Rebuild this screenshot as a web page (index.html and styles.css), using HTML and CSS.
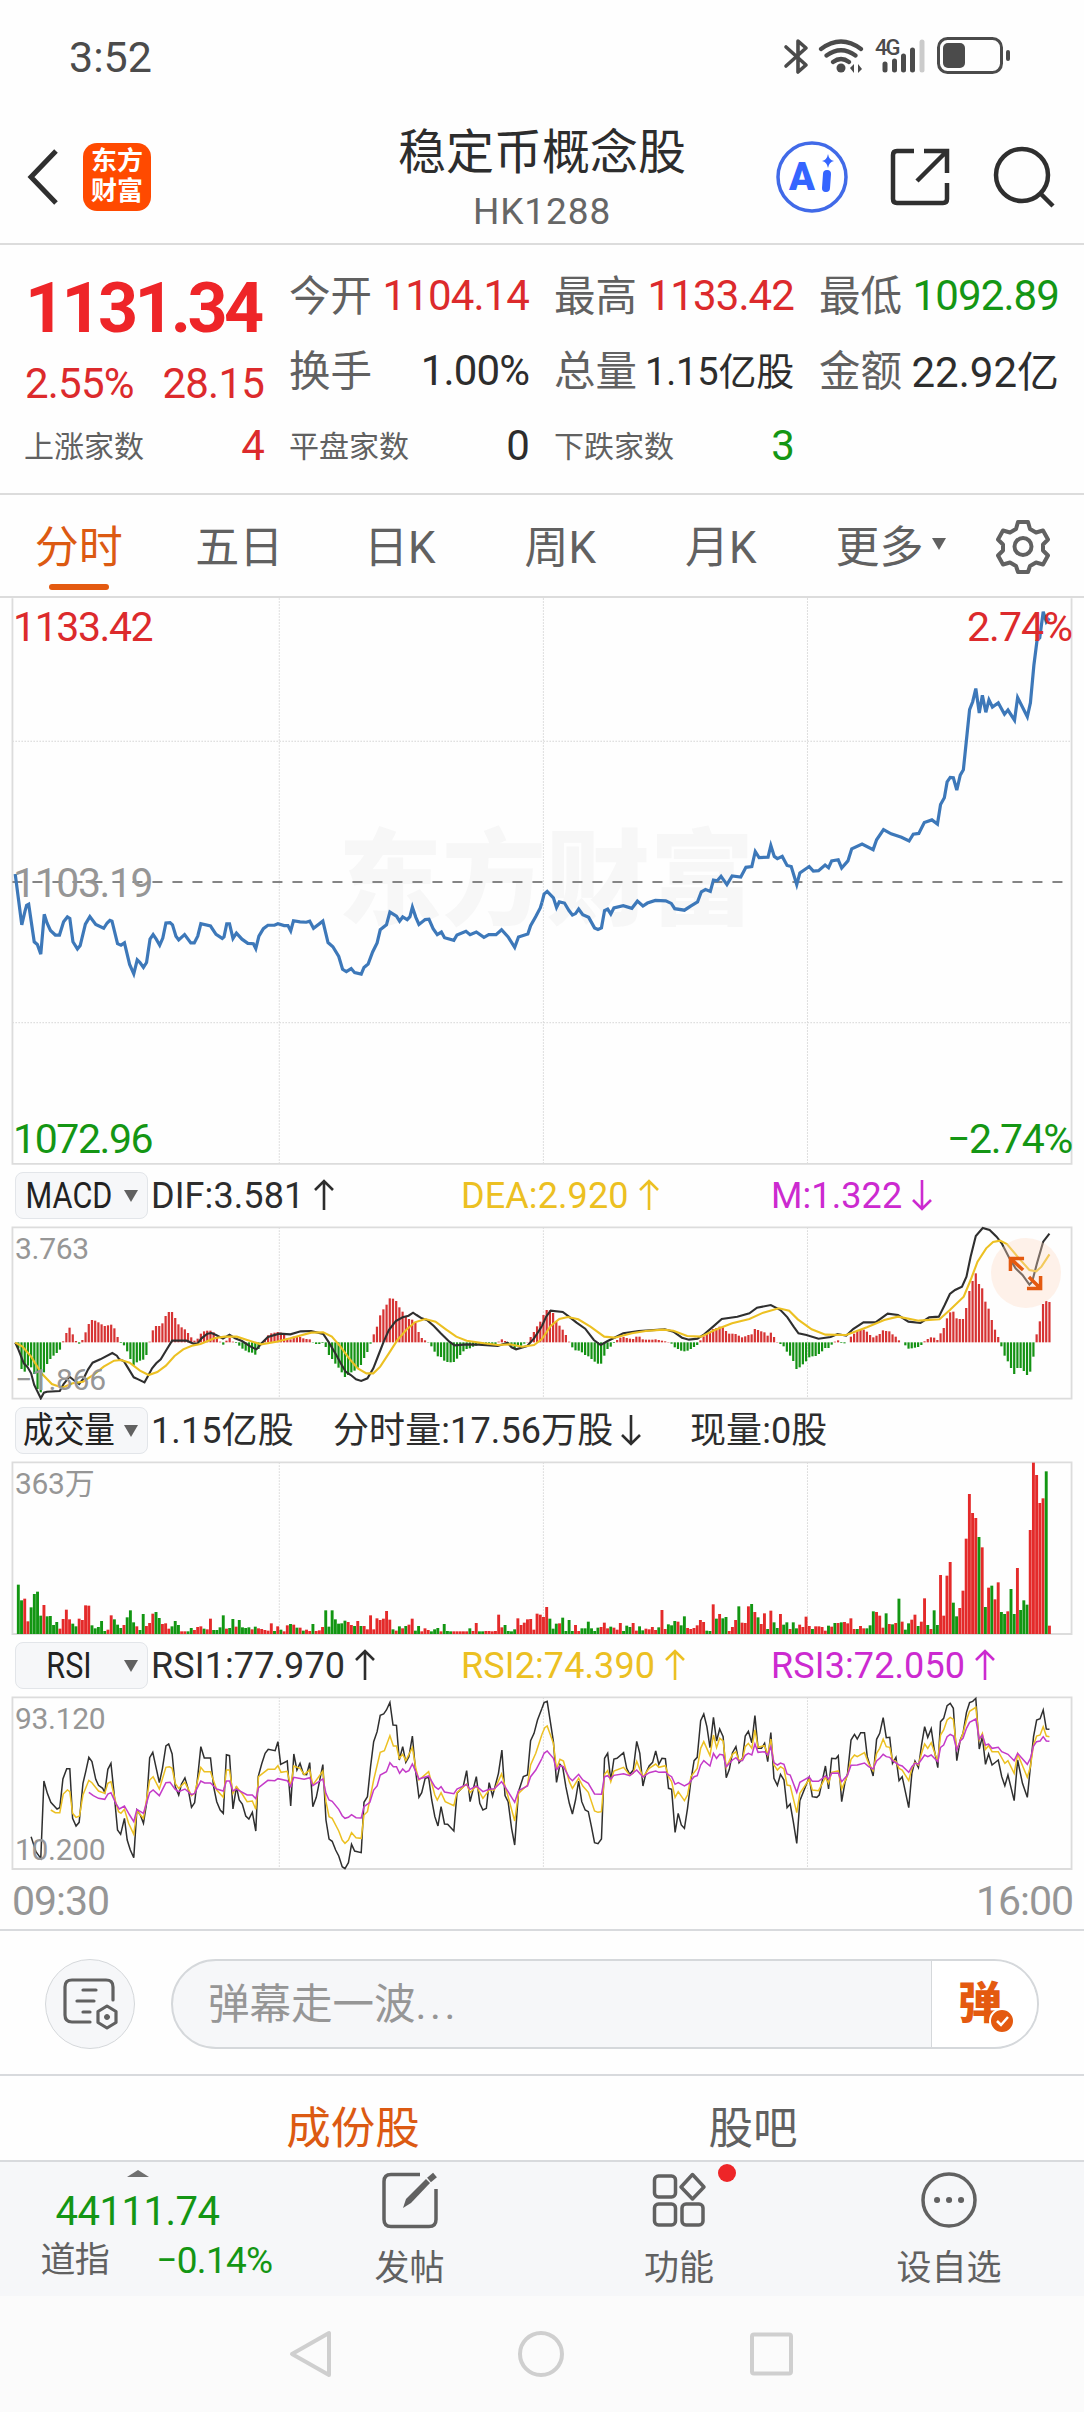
FILE: index.html
```html
<!DOCTYPE html>
<html lang="zh-CN">
<head>
  <meta charset="UTF-8">
  <meta name="viewport" content="width=device-width, initial-scale=1.0">
  <title>稳定币概念股 HK1288</title>
  <link rel="stylesheet" href="styles.css">
</head>
<body>
  <div class="statusbar">
    <span class="clock">3:52</span>
    <svg class="status-icons" width="230" height="44" viewBox="782 34 230 44" fill="none" stroke="#4b4b4b">
      <path d="M786 47l20 18-8 7V41l8 7-20 18" stroke-width="3.600" stroke-linejoin="round" stroke-linecap="round"/>
      <path d="M821 49q20-15 40 0M826.500 55.500q14.500-10.500 29 0M833 62q8-6 16 0" stroke-width="4.200" stroke-linecap="round"/>
      <circle cx="841" cy="68" r="4.500" fill="#4b4b4b" stroke="none"/>
      <path d="M850 68l4-4v9zM862 69l-4 4v-9z" fill="#4b4b4b" stroke="none"/>
      <text x="875" y="55" class="net">4G</text>
      <path d="M885 64v6M894.500 61v9M903.500 56v14M912.500 50v20" stroke-width="5" stroke-linecap="round"/>
      <path d="M922 42v28" stroke="#cbcbcb" stroke-width="5" stroke-linecap="round"/>
      <rect x="938.500" y="38.500" width="63" height="34" rx="9" stroke-width="3"/>
      <rect x="943" y="43" width="22" height="25" rx="5" fill="#4b4b4b" stroke="none"/>
      <path d="M1008 52v7" stroke-width="4" stroke-linecap="round"/>
    </svg>
  </div>

  <header class="header">
    <div class="header-left">
      <svg width="34" height="58" viewBox="0 0 34 58" fill="none" stroke="#2f2f2f" stroke-width="5"><path d="M31 3L6 29l25 26"/></svg>
      <div class="logo">东方<br>财富</div>
    </div>
    <div class="title">
      <h1>稳定币概念股</h1>
      <p>HK1288</p>
    </div>
    <div class="header-right">
      <svg width="74" height="74" viewBox="0 0 74 74">
        <circle cx="37" cy="37" r="34" fill="#fff" stroke="#416ae8" stroke-width="3.500"/>
        <text x="14" y="50" class="ai">A</text>
        <path d="M52 34l-1 14" stroke="#3565ff" stroke-width="8" stroke-linecap="round"/>
        <path d="M53 14q1 6 6 7-5 1-6 7-1-6-6-7 5-1 6-7z" fill="#3565ff"/>
      </svg>
      <svg width="60" height="60" viewBox="0 0 60 60" fill="none" stroke="#2f2f2f" stroke-width="4.500">
        <path d="M24 4H7q-4 0-4 4v44q0 4 4 4h46q4 0 4-4V36M34 4h23v22M57 4L27 34"/>
      </svg>
      <svg width="64" height="64" viewBox="0 0 64 64" fill="none" stroke="#2f2f2f" stroke-width="4.500">
        <circle cx="31" cy="30" r="26"/><path d="M49 48l13 13"/>
      </svg>
    </div>
  </header>

  <section class="quote">
    <div class="main-price">
      <strong>1131.34</strong>
      <div class="change"><span>2.55%</span><span>28.15</span></div>
    </div>
    <div class="cell"><label>今开</label><b class="red">1104.14</b></div>
    <div class="cell"><label>最高</label><b class="red">1133.42</b></div>
    <div class="cell"><label>最低</label><b class="green">1092.89</b></div>
    <div class="cell"><label>换手</label><b>1.00%</b></div>
    <div class="cell"><label>总量</label><b class="tight">1.15亿股</b></div>
    <div class="cell"><label>金额</label><b class="amount">22.92亿</b></div>
    <div class="cell small"><label>上涨家数</label><b class="red">4</b></div>
    <div class="cell small"><label>平盘家数</label><b>0</b></div>
    <div class="cell small"><label>下跌家数</label><b class="green">3</b></div>
  </section>

  <nav class="tabs">
    <a class="active">分时</a>
    <a>五日</a>
    <a>日K</a>
    <a>周K</a>
    <a>月K</a>
    <a class="more">更多<i class="caret"></i></a>
    <a class="gear">
      <svg width="56" height="56" viewBox="0 0 56 56" fill="none" stroke="#616161" stroke-width="4" stroke-linejoin="round">
        <path d="M23 4h10l2 7 6 3.500 7-2 5 9-5 5v6l5 5-5 9-7-2-6 3.500-2 6H23l-2-6-6-3.500-7 2-5-9 5-5v-6l-5-5 5-9 7 2 6-3.500z"/>
        <circle cx="28" cy="28.500" r="8.500"/>
      </svg>
    </a>
  </nav>

  <div class="chart price">
    <span class="watermark">东方财富</span>
    <svg viewBox="0 21.3 3136 1509.5" preserveAspectRatio="none">
      <path class="grid" d="M808 22V1525M1572 22V1525M2336 22V1525M36 402H3100M36 1150H3100"/>
      <path class="frame" d="M36 22V1525H3100V22"/>
      <path class="base" d="M36 776H3100"/>
      <polyline class="blue" points="44,755 63,890 72,855 77,838 83,835 99,935 108,942 118,968 128,862 136,885 146,905 160,917 172,917 184,882 195,869 202,873 211,935 224,954 232,945 247,888 260,868 277,889 300,899 310,885 318,878 324,880 340,940 350,944 360,938 375,995 387,1020 397,983 405,990 415,1003 424,990 434,928 443,916 452,928 462,944 471,925 480,885 492,884 499,890 509,920 517,930 534,916 552,938 562,938 572,920 581,887 609,893 625,915 643,926 648,922 656,887 664,887 674,926 684,912 700,928 717,939 733,940 740,953 749,920 762,900 775,891 794,891 804,887 822,892 833,892 841,906 849,879 868,882 886,883 896,880 907,899 934,880 949,937 963,948 980,974 991,1008 1002,1014 1016,1006 1026,1017 1045,1021 1053,1003 1065,994 1078,962 1091,938 1100,903 1118,890 1128,856 1147,867 1156,880 1165,869 1178,876 1186,868 1193,843 1203,870 1212,889 1230,876 1241,875 1253,900 1265,916 1277,909 1286,924 1313,931 1322,917 1348,907 1360,916 1378,909 1400,923 1414,916 1435,916 1451,903 1470,922 1489,950 1500,922 1527,914 1535,892 1550,868 1563,845 1568,830"/>
      <polyline class="blue" transform="translate(1568 0)" points="0,830 6,808 15,801 33,818 42,844 50,829 65,832 78,852 88,864 97,860 106,848 118,863 135,870 152,898 162,902 172,898 181,852 190,848 199,861 208,845 235,839 260,846 276,827 292,840 305,832 328,825 358,826 374,833 384,847 412,851 430,840 450,829 461,802 473,796 487,801 496,771 507,773 518,761 535,783 550,760 575,763 590,737 607,735 617,695 628,711 654,710 662,679 672,708 681,714 695,708 709,732 721,735 737,783 746,752 773,735 785,747 800,746 819,731 829,738 838,720 857,717 867,739 885,720 896,688 926,675 958,690 968,664 988,637 1010,648 1040,657 1062,667 1074,649 1090,647 1106,618 1128,611 1144,622 1153,570 1164,552 1172,510 1181,498 1190,499 1200,532 1210,492 1219,478 1230,380 1237,318 1246,297 1255,262 1265,327 1274,280 1284,325 1293,292 1303,311 1320,300 1338,330 1348,319 1367,346 1376,286 1404,337 1413,300 1423,200 1432,135 1440,127 1450,58 1459,85 1468,75"/>
    </svg>
    <span class="tl red">1133.42</span>
    <span class="tr red">2.74%</span>
    <span class="ml">1103.19</span>
    <span class="bl green">1072.96</span>
    <span class="br green">−2.74%</span>
  </div>

  <div class="legend macd-legend">
    <button><em>MACD</em><i class="caret"></i></button>
    <span>DIF:3.581<svg class="arrow" viewBox="0 0 20 32"><path d="M10 31V2M1 11l9-9 9 9"/></svg></span>
    <span class="yellow">DEA:2.920<svg class="arrow" viewBox="0 0 20 32"><path d="M10 31V2M1 11l9-9 9 9"/></svg></span>
    <span class="purple">M:1.322<svg class="arrow" viewBox="0 0 20 32"><path d="M10 1v29M1 21l9 9 9-9"/></svg></span>
  </div>
  <div class="chart sub">
    <svg viewBox="0 198 3136 522" preserveAspectRatio="none">
      <path class="grid" d="M808 202V716M1572 202V716M2336 202V716"/>
      <path class="frame" d="M36 202H3100V716H36z"/>
      <g id="macdBars"></g>
      <polyline class="dark" points="44,548 53,568 69,610 80,622 90,640 99,675 118,715 127,698 136,695 173,693 184,672 201,650 213,660 229,672 242,655 255,628 268,608 290,598 325,579 338,587 345,598 358,603 368,620 387,652 400,658 418,667 427,650 440,625 452,610 465,598 480,572 498,542 540,542 560,551 572,550 583,535 600,521 612,519 625,525 645,536 664,524 680,535 700,543 725,560 742,568 757,550 775,531 808,521 840,523 870,514 900,513 935,522 950,545 970,580 985,608 1000,635 1015,645 1030,658 1045,663 1063,655 1080,625 1095,585 1110,545 1125,510 1145,483 1165,472 1182,467 1195,458 1205,465 1220,475 1235,480 1255,498 1275,520 1300,545 1315,556 1350,553 1385,554 1440,558 1468,548 1480,562 1493,568 1525,558 1545,535 1568,498"/>
      <polyline class="dark" transform="translate(1568 0)" points="0,498 12,470 25,452 60,456 78,470 100,488 125,506 150,540 170,555 190,543 208,534 235,520 280,513 355,508 380,515 405,533 425,539 450,536 470,522 495,500 520,477 565,470 600,460 622,443 662,435 690,450 710,472 728,500 742,520 765,525 800,536 835,531 855,522 880,527 900,507 930,487 965,487 1000,461 1030,465 1060,485 1095,489 1120,472 1148,470 1165,435 1180,402 1195,390 1215,380 1228,350 1240,290 1255,228 1275,204 1295,210 1315,230 1330,250 1350,290 1370,325 1390,345 1410,374 1418,365 1432,310 1450,245 1468,221"/>
      <polyline class="gold" points="44,548 65,560 90,590 120,640 150,672 180,683 210,670 240,665 270,645 300,620 330,602 350,600 375,608 405,632 430,645 455,636 480,617 505,588 530,568 555,557 580,552 620,535 650,530 685,530 715,540 755,553 800,545 840,535 900,518 935,517 960,530 985,560 1010,595 1035,625 1060,640 1080,640 1100,620 1125,580 1150,540 1175,510 1200,487 1230,477 1260,485 1290,508 1320,530 1350,542 1400,550 1440,555 1475,553 1510,560 1545,555 1568,537"/>
      <polyline class="gold" transform="translate(1568 0)" points="0,537 25,498 50,477 75,471 105,478 140,500 180,530 210,533 260,520 300,513 350,509 380,512 420,528 460,530 500,510 550,490 600,477 640,458 685,445 715,452 740,478 780,508 820,524 880,525 940,502 990,480 1030,470 1090,482 1150,478 1180,450 1220,410 1240,360 1260,305 1285,265 1305,246 1325,242 1345,252 1380,295 1410,330 1430,334 1445,320 1468,283"/>
    </svg>
    <span class="tl">3.763</span>
    <span class="bl">−1.866</span>
    <div class="expand">
      <svg width="70" height="72" viewBox="0 0 70 72" fill="none" stroke="#e45a10" stroke-width="3.500">
        <path d="M19 34V21h14M20 22l12 11M50 39v13H36M49 51L38 40"/>
      </svg>
    </div>
  </div>

  <div class="legend">
    <button><em>成交量</em><i class="caret"></i></button>
    <span class="vol">1.15亿股</span>
    <span class="vol-now">分时量:17.56万股<svg class="arrow" viewBox="0 0 20 32"><path d="M10 1v29M1 21l9 9 9-9"/></svg></span>
    <span>现量:0股</span>
  </div>
  <div class="chart sub">
    <svg viewBox="0 183 3136 522" preserveAspectRatio="none">
      <path class="grid" d="M808 187V702M1572 187V702M2336 187V702"/>
      <path class="frame" d="M36 187H3100V702H36z"/>
      <g id="volumeBars"></g>
    </svg>
    <span class="tl">363万</span>
  </div>

  <div class="legend">
    <button><em>RSI</em><i class="caret"></i></button>
    <span>RSI1:77.970<svg class="arrow" viewBox="0 0 20 32"><path d="M10 31V2M1 11l9-9 9 9"/></svg></span>
    <span class="yellow">RSI2:74.390<svg class="arrow" viewBox="0 0 20 32"><path d="M10 31V2M1 11l9-9 9 9"/></svg></span>
    <span class="purple">RSI3:72.050<svg class="arrow" viewBox="0 0 20 32"><path d="M10 31V2M1 11l9-9 9 9"/></svg></span>
  </div>
  <div class="chart sub rsi">
    <svg viewBox="0 168 3136 522" preserveAspectRatio="none">
      <path class="grid" d="M808 172V687M1572 172V687M2336 172V687"/>
      <path class="frame" d="M36 172H3100V687H36z"/>
      <polyline class="dark" points="90,590 104,635 118,655 127,423 137,460 147,487 165,507 173,503 182,417 193,386 202,386 210,535 220,558 229,547 240,430 248,395 257,352 266,365 277,418 285,436 297,445 303,457 312,388 321,370 331,470 340,570 349,583 360,535 368,600 377,630 387,653 396,510 406,525 415,550 424,490 433,353 442,337 452,385 461,428 470,385 480,318 488,312 498,342 507,440 517,465 525,432 535,414 544,445 554,502 563,488 572,410 581,320 591,354 609,354 618,440 627,485 637,510 646,520 655,344 664,347 674,507 684,440 692,480 701,492 711,528 720,537 730,517 740,573 747,410 757,372 767,340 776,328 796,332 804,305 812,373 831,363 841,498 850,342 859,390 868,370 878,403 887,404 896,368 905,500 915,472 934,374 943,540 952,597 961,604 971,630 980,648 990,680 998,686 1008,668 1017,613 1026,633 1045,638 1053,487 1063,470 1072,380 1081,305 1091,275 1100,226 1110,222 1118,210 1128,187 1137,255 1147,256 1155,360 1165,320 1174,367 1183,350 1193,288 1202,390 1212,472 1220,458 1230,415 1240,412 1249,480 1258,530 1267,558 1276,500 1286,552 1295,553 1313,573 1322,460 1340,440 1350,392 1360,485 1378,410 1388,490 1397,510 1407,505 1415,428 1425,468 1442,400 1452,330 1461,467 1470,485 1480,565 1489,615 1500,455 1514,410 1526,405 1535,302 1545,280 1555,240 1568,205"/>
      <polyline class="dark" transform="translate(1568 0)" points="0,205 6,188 15,184 33,305 42,427 52,373 60,382 69,440 79,490 88,522 97,480 106,423 115,485 125,510 134,515 143,560 152,608 162,611 172,597 181,355 190,340 199,422 208,357 217,355 236,338 245,385 254,403 264,390 274,304 283,340 292,438 301,398 310,378 320,367 329,333 338,373 347,355 357,356 366,445 375,448 385,577 394,520 403,555 412,565 421,505 431,420 440,362 449,352 459,242 468,222 477,260 486,323 496,232 505,303 514,267 524,290 533,413 542,388 551,338 561,320 570,368 580,355 588,288 597,274 607,308 616,227 625,325 635,325 644,310 653,365 662,278 671,415 681,436 690,403 700,420 709,503 718,492 727,545 737,610 746,482 773,412 782,470 795,472 802,465 820,378 829,447 838,355 850,356 857,347 867,485 876,430 884,400 894,300 904,283 912,297 922,278 933,278 941,350 958,408 968,298 977,280 987,233 996,293 1006,292 1014,370 1024,352 1033,422 1042,410 1061,503 1070,400 1079,363 1089,383 1098,315 1107,260 1116,292 1126,266 1135,330 1145,383 1153,245 1162,235 1172,197 1181,190 1190,205 1200,362 1210,300 1218,280 1228,217 1237,188 1246,184 1255,175 1265,327 1274,290 1283,373 1292,342 1302,375 1320,360 1330,410 1339,437 1348,405 1366,482 1376,360 1390,430 1404,472 1413,380 1422,290 1431,240 1441,236 1450,210 1459,267 1468,268"/>
      <polyline class="gold" points="147,510 160,518 173,518 183,462 195,450 202,455 210,520 220,532 230,528 240,465 257,421 266,428 285,453 303,460 312,430 321,425 333,480 343,515 350,520 360,508 372,550 387,583 396,512 415,535 433,420 443,410 461,447 480,382 490,380 498,385 507,430 517,445 535,427 554,467 563,460 581,382 591,395 609,395 627,450 646,472 655,390 664,390 674,460 684,440 701,462 715,485 730,483 740,508 748,410 775,388 795,388 804,377 813,397 831,394 841,440 850,378 868,385 880,404 896,390 905,435 934,393 943,485 952,530 961,535 980,573 990,600 998,610 1008,600 1017,578 1030,593 1045,595 1053,525 1063,515 1081,420 1100,337 1112,332 1128,287 1138,318 1147,318 1155,355 1165,343 1174,362 1193,323 1203,385 1212,420 1240,395 1258,465 1265,480 1276,458 1288,485 1313,497 1322,458 1350,432 1360,458 1378,438 1397,475 1415,450 1430,450 1451,402 1470,470 1489,543 1500,460 1526,435 1535,375 1550,340 1568,283"/>
      <polyline class="gold" transform="translate(1568 0)" points="0,283 8,263 15,258 33,310 42,387 52,358 62,363 79,425 88,445 106,415 118,438 134,457 152,513 162,517 172,515 181,403 190,392 199,425 208,393 236,382 254,406 264,400 274,364 292,411 310,385 329,372 338,382 357,377 366,410 375,425 385,472 394,455 412,482 421,465 431,410 449,385 459,325 468,305 486,347 496,285 505,323 514,295 524,303 533,382 551,343 561,335 570,362 580,358 588,320 597,310 607,325 616,270 625,322 644,317 653,345 662,297 671,375 681,390 690,380 700,387 709,435 718,437 737,518 746,460 773,418 782,450 800,452 820,412 829,430 838,397 857,393 867,447 884,405 894,358 904,345 912,350 933,338 945,370 958,392 968,340 977,325 987,297 996,320 1006,322 1014,360 1024,365 1033,385 1042,390 1061,422 1070,385 1079,368 1089,375 1098,340 1107,312 1116,325 1126,308 1145,365 1153,285 1162,270 1172,240 1181,232 1190,238 1200,330 1218,280 1228,240 1237,214 1255,202 1265,300 1274,280 1283,328 1292,317 1302,335 1320,335 1339,370 1348,362 1366,400 1376,342 1404,412 1413,380 1422,315 1431,288 1441,285 1450,260 1459,288 1468,290"/>
      <polyline class="pink" points="257,457 270,467 285,475 303,478 312,462 321,458 335,490 345,507 360,498 375,525 387,545 396,508 415,520 433,458 443,450 461,467 480,428 492,427 507,448 517,455 535,447 554,464 563,460 581,423 592,429 609,429 627,447 646,453 655,423 664,423 674,453 684,447 715,465 730,465 740,476 748,443 775,421 795,422 804,416 831,422 841,440 850,412 880,418 896,413 905,437 934,417 943,460 952,480 961,484 980,508 990,527 998,535 1008,532 1017,524 1030,533 1045,534 1053,500 1070,487 1081,450 1091,438 1100,405 1118,395 1128,368 1138,380 1147,380 1156,400 1165,387 1174,396 1183,392 1193,372 1212,417 1240,408 1258,440 1268,448 1276,440 1286,456 1313,461 1322,447 1350,433 1360,448 1378,438 1397,455 1415,448 1430,446 1451,425 1470,455 1489,487 1500,452 1526,438 1535,410 1550,390 1568,355"/>
      <polyline class="pink" transform="translate(1568 0)" points="0,355 6,340 15,333 33,355 42,389 52,377 62,380 79,413 88,422 106,403 118,420 134,430 152,462 172,463 181,410 190,407 199,417 208,406 236,401 254,407 274,390 292,411 310,398 329,393 338,397 357,396 366,405 375,410 385,433 394,428 412,438 425,430 440,410 449,407 459,375 468,362 486,378 496,340 505,355 514,343 524,345 533,380 551,360 561,353 570,363 580,362 588,346 597,340 607,345 616,312 625,337 644,335 653,345 662,320 671,368 681,375 690,369 700,373 709,402 718,405 737,457 746,427 773,411 782,424 800,424 820,408 829,417 838,400 857,399 867,425 884,405 894,376 912,375 933,369 945,380 958,387 968,363 977,355 987,343 996,350 1006,352 1014,362 1033,375 1042,378 1061,397 1070,380 1079,370 1089,372 1107,345 1116,350 1126,345 1145,365 1153,322 1162,315 1172,290 1181,283 1190,288 1200,330 1210,303 1218,295 1228,265 1237,247 1255,237 1265,297 1274,285 1283,315 1292,312 1302,325 1320,322 1330,335 1348,343 1366,362 1376,340 1404,373 1413,355 1422,318 1431,305 1441,303 1450,290 1459,303 1468,304"/>
    </svg>
    <span class="tl">93.120</span>
    <span class="bl">10.200</span>
  </div>
  <div class="times"><span>09:30</span><span>16:00</span></div>

  <div class="comment">
    <div class="round">
      <svg width="60" height="56" viewBox="0 0 60 56" fill="none" stroke="#616161" stroke-width="3.200" stroke-linecap="round">
        <path d="M53 24V11q0-7-7-7H12q-7 0-7 7v28q0 7 7 7h18M23 14h13M17 25h17M23 36h7"/>
        <path d="M47 30l9 5.500v11L47 52l-9-5.500v-11z" stroke-linejoin="round"/>
        <circle cx="47" cy="41" r="2.500" fill="#616161" stroke-width="1"/>
      </svg>
    </div>
    <div class="pill">
      <span class="placeholder">弹幕走一波<em>...</em></span>
      <span class="dan">弹<svg width="26" height="26" viewBox="0 0 26 26"><circle cx="13" cy="13" r="12" fill="#e45a10" stroke="#fff" stroke-width="2"/><path d="M8 13l4 4 7-8" fill="none" stroke="#fff" stroke-width="2.500"/></svg></span>
    </div>
  </div>

  <div class="bottom-tabs">
    <a class="active">成份股</a>
    <a>股吧</a>
  </div>

  <footer class="toolbar">
    <div class="index">
      <i class="up"></i>
      <b>44111.74</b>
      <p><span>道指</span><em>−0.14%</em></p>
    </div>
    <div class="item">
      <svg width="60" height="60" viewBox="0 0 60 60" fill="none" stroke="#616161" stroke-width="3.500">
        <path d="M40 4.500H11q-7 0-7 7v38q0 7 7 7h38q7 0 7-7V19"/>
        <path d="M23 38l3-9L46 9l4 4-19 20z" fill="#616161" stroke="none"/>
        <path d="M49 10l6-5" stroke-width="6"/>
      </svg>
      <span>发帖</span>
    </div>
    <div class="item">
      <svg width="60" height="60" viewBox="0 0 60 60" fill="none" stroke="#616161" stroke-width="3.500" stroke-linejoin="round">
        <rect x="5.500" y="6" width="21" height="21" rx="4"/>
        <path d="M43.500 4.500L55 17 43.500 29 32 17z"/>
        <rect x="5.500" y="34" width="21" height="21" rx="4"/>
        <rect x="33" y="34" width="21" height="21" rx="4"/>
      </svg>
      <span>功能</span>
      <i class="dot"></i>
    </div>
    <div class="item">
      <svg width="60" height="60" viewBox="0 0 60 60" fill="none" stroke="#616161" stroke-width="3.500">
        <circle cx="30" cy="30" r="26"/>
        <path d="M18 30h.1M30 30h.1M42 30h.1" stroke-width="6" stroke-linecap="round"/>
      </svg>
      <span>设自选</span>
    </div>
  </footer>

  <div class="sysnav">
    <svg width="50" height="50" viewBox="0 0 50 50"><path d="M43 4v42L6 25z"/></svg>
    <svg width="50" height="50" viewBox="0 0 50 50"><circle cx="25" cy="25" r="21"/></svg>
    <svg width="50" height="50" viewBox="0 0 50 50"><rect x="6" y="5.500" width="39" height="39" rx="2"/></svg>
  </div>

  <script src="script.js"></script>
</body>
</html>
```
FILE: styles.css
```css
* {
  box-sizing: border-box;
}

body {
  margin: 0;
  width: 1084px;
  background: #fefefe;
  color: #2d2d2d;
  font-family: Roboto, "Noto Sans CJK SC", sans-serif;
}

b, em, i, label, h1, p {
  font-weight: normal;
  font-style: normal;
  margin: 0;
}

svg {
  display: block;
}

.red { color: #dc2a2c; }
.green { color: #149614; }
.yellow { color: #ecc022; }
.purple { color: #cc2ad0; }

/* status bar */
.statusbar {
  height: 111px;
  padding: 34px 72px 0 69px;
  display: flex;
  justify-content: space-between;
}

.clock {
  font-size: 43px;
  line-height: 47px;
  color: #4b4b4b;
}

.net {
  font-size: 22px;
  font-weight: 500;
  letter-spacing: -2px;
  fill: #4b4b4b;
  stroke: none;
}

/* header */
.header {
  height: 134px;
  display: grid;
  grid-template-columns: 300px 484px 300px;
  border-bottom: 2px solid #dcdcdc;
}

.header-left {
  display: flex;
  align-items: center;
  padding-left: 25px;
  gap: 24px;
}

.logo {
  width: 68px;
  height: 68px;
  border-radius: 14px;
  background: #ff4a00;
  color: #fff;
  font-size: 26px;
  font-weight: bold;
  line-height: 30px;
  padding-top: 3px;
  text-align: center;
}

.title {
  text-align: center;
}

.title h1 {
  font-size: 48px;
  line-height: 64px;
  margin-top: 10px;
}

.title p {
  font-size: 37px;
  line-height: 44px;
  margin-top: 5px;
  letter-spacing: 0.9px;
  color: #666;
}

.header-right {
  display: flex;
  align-items: center;
  justify-content: flex-end;
  padding-right: 29px;
  gap: 41px;
}

.header-right svg {
  flex-shrink: 0;
}

.ai {
  font-size: 38px;
  font-weight: 900;
  fill: #3565ff;
}

/* quote numbers */
.quote {
  height: 250px;
  padding: 13px 25px 0;
  display: grid;
  grid-template-columns: repeat(4, 239px);
  grid-template-rows: 75px 75px 74px;
  column-gap: 26px;
  border-bottom: 2px solid #dcdcdc;
}

.main-price {
  grid-row: span 2;
  color: #ee2528;
}

.main-price strong {
  display: block;
  font-size: 70px;
  line-height: 100px;
  letter-spacing: -3.7px;
}

.change {
  display: flex;
  justify-content: space-between;
  font-size: 42px;
  line-height: 52px;
  letter-spacing: -0.8px;
  color: #dc2a2c;
}

.cell {
  display: flex;
  justify-content: space-between;
  align-items: center;
  white-space: nowrap;
}

.cell label {
  margin-left: -1px;
  padding-bottom: 5px;
  font-size: 41.5px;
  color: #616161;
}

.cell b {
  font-size: 42px;
  letter-spacing: -0.9px;
}

.cell .tight {
  font-size: 38px;
  letter-spacing: -0.2px;
  padding-bottom: 4px;
}

.cell .amount {
  letter-spacing: 0;
  padding-bottom: 4px;
}

.cell.small label {
  padding-bottom: 2px;
  font-size: 30px;
}

/* period tabs */
.tabs {
  height: 103px;
  display: grid;
  grid-template-columns: repeat(5, 160.5px) 184px 1fr;
  border-bottom: 2px solid #dcdcdc;
}

.tabs a {
  position: relative;
  display: flex;
  align-items: center;
  justify-content: center;
  padding: 0 3px 3px 0;
  font-size: 44px;
  color: #616161;
}

.tabs .active {
  color: #dc5a12;
}

.tabs .active::after {
  content: "";
  position: absolute;
  bottom: 6px;
  width: 60px;
  height: 6px;
  border-radius: 3px;
  background: #e45a10;
}

.tabs .more {
  padding-right: 8px;
}

.tabs .gear {
  padding: 0 25px 0 0;
}

.caret {
  border: 7px solid transparent;
  border-top: 12px solid #616161;
  border-bottom: 0;
}

.more .caret {
  margin-left: 8px;
}

/* charts */
.chart {
  position: relative;
  color: #969696;
}

.chart svg {
  position: relative;
  width: 100%;
  height: 100%;
}

.chart path, .chart polyline {
  fill: none;
  vector-effect: non-scaling-stroke;
}

.price {
  height: 568px;
  font-size: 41px;
  letter-spacing: -1.4px;
}

.sub {
  height: 174px;
  font-size: 30px;
  letter-spacing: -0.3px;
}

.grid {
  stroke: #d4d4d4;
  stroke-width: 1;
  stroke-dasharray: 1.5 1.5;
}

.frame {
  stroke: #dcdcdc;
  stroke-width: 1.8;
}

.base {
  stroke: #858585;
  stroke-width: 2;
  stroke-dasharray: 10 10;
}

.blue {
  stroke: #3d78b9;
  stroke-width: 3.2;
}

.dark { stroke: #2f2f2f; stroke-width: 2.1; }
.gold { stroke: #ecc022; stroke-width: 2.1; }
.pink { stroke: #c43bc8; stroke-width: 1.7; }

.rsi .dark, .rsi .gold, .rsi .pink {
  stroke-width: 1.5;
}

.chart span {
  position: absolute;
  line-height: 1;
}

.price .tl { left: 13px; top: 9px; }
.price .tr { right: 12px; top: 9px; letter-spacing: -1px; }
.price .ml { left: 13px; top: 265px; }
.price .bl { left: 13px; bottom: 6px; }
.price .br { right: 12px; bottom: 6px; letter-spacing: -1.4px; }

.sub .tl { left: 15px; top: 8px; }
.sub .bl { left: 15px; bottom: 5px; }

.price .watermark {
  left: 338px;
  top: 232px;
  font-size: 104px;
  font-weight: 900;
  letter-spacing: 0;
  color: #f7f7f7;
}

.expand {
  position: absolute;
  left: 991px;
  top: 12px;
  width: 70px;
  height: 70px;
  border-radius: 50%;
  background: rgba(255, 218, 198, 0.36);
}

/* indicator rows */
.legend {
  height: 61px;
  padding: 7px 0 0 15px;
  display: flex;
  font-size: 36px;
  line-height: 48px;
  white-space: nowrap;
}

.macd-legend {
  height: 60px;
  padding-top: 6px;
}

.legend button {
  width: 133px;
  height: 47px;
  margin-right: 3px;
  padding: 0 9px 0 9px;
  display: flex;
  align-items: center;
  justify-content: space-between;
  border: 1.5px solid #e2e5e9;
  border-radius: 8px;
  background: #f6f7f9;
  font: inherit;
  color: #222;
}

.legend em {
  width: 88px;
  display: flex;
  justify-content: center;
  transform: scaleX(0.85);
}

.legend span {
  width: 310px;
  letter-spacing: 0.1px;
}

.legend .vol { width: 182px; }
.legend .vol-now { width: 357px; }

.arrow {
  display: inline-block;
  width: 20px;
  height: 32px;
  margin-left: 10px;
  vertical-align: -3px;
  fill: none;
  stroke: currentColor;
  stroke-width: 2.6;
}

.vol-now .arrow {
  margin-left: 8px;
}

.times {
  height: 61px;
  padding: 0 11px 0 12px;
  display: flex;
  justify-content: space-between;
  font-size: 41px;
  line-height: 62px;
  letter-spacing: -1px;
  color: #969696;
  border-bottom: 2px solid #d8dadd;
}

/* comment bar */
.comment {
  height: 145px;
  padding: 2px 45px 0;
  display: flex;
  align-items: center;
  gap: 36px;
  border-bottom: 2px solid #d8dadd;
}

.round {
  width: 90px;
  height: 90px;
  display: flex;
  align-items: center;
  justify-content: center;
  border: 1.5px solid #d5d8db;
  border-radius: 50%;
  background: #f6f7f9;
}

.pill {
  flex: 1;
  height: 90px;
  display: flex;
  border: 2px solid #d5d8db;
  border-radius: 45px;
  background: #f6f7f9;
  overflow: hidden;
}

.placeholder {
  flex: 1;
  padding-left: 35px;
  font-size: 41.5px;
  line-height: 88px;
  color: #969696;
}

.placeholder em {
  letter-spacing: 3.5px;
}

.dan {
  position: relative;
  width: 106px;
  padding-left: 26px;
  border-left: 1.5px solid #d5d8db;
  background: #fff;
  font-size: 44px;
  font-weight: 900;
  line-height: 86px;
  color: #e45a10;
}

.dan svg {
  position: absolute;
  left: 57px;
  top: 47px;
}

.bottom-tabs {
  height: 84px;
  padding-left: 153px;
  display: grid;
  grid-template-columns: 400px 400px;
  text-align: center;
  font-size: 44.5px;
  line-height: 107px;
  overflow: hidden;
  color: #616161;
}

.bottom-tabs .active {
  color: #dc5a12;
}

/* bottom toolbar */
.toolbar {
  height: 136px;
  display: grid;
  grid-template-columns: 275px 269px 270px 270px;
  border-top: 2px solid #d8dadd;
  background: #f6f7f9;
  color: #616161;
}

.index {
  padding-top: 8px;
  display: flex;
  flex-direction: column;
  align-items: center;
  color: #149614;
}

.up {
  border: 11px solid transparent;
  border-bottom: 7px solid #707070;
  border-top: 0;
}

.index b {
  font-size: 40px;
  line-height: 46px;
  margin-top: 12px;
  letter-spacing: -0.5px;
}

.index p {
  width: 232px;
  margin-left: 38px;
  display: flex;
  justify-content: space-between;
  font-size: 37px;
  line-height: 51px;
  letter-spacing: -0.7px;
}

.index p span {
  font-size: 35px;
  color: #616161;
}

.item {
  position: relative;
  padding-top: 8px;
  display: flex;
  flex-direction: column;
  align-items: center;
  font-size: 35px;
}

.item span {
  line-height: 50px;
  margin-top: 14px;
}

.dot {
  position: absolute;
  left: 174px;
  top: 2px;
  width: 18px;
  height: 18px;
  border-radius: 50%;
  background: #ee2528;
}

.sysnav {
  height: 117px;
  padding: 0 288px 2px 286px;
  display: flex;
  align-items: center;
  justify-content: space-between;
  background: #fbfbfb;
}

.sysnav svg {
  fill: none;
  stroke: #cfcfcf;
  stroke-width: 4;
  stroke-linejoin: round;
}
```
FILE: script.js
```js
// one value per minute: positive = red, negative = green
const volume = [
  -148, -101, 106, 38, -80, -120, -127, -55, 87, -53, -54, -27, -36, 16, 45, 73, 44, -31, -23, 46,
  42, 86, 85, -26, -17, -21, -39, -9, 13, 56, -44, -28, -18, 27, -50, -71, -35, 23, -12, -60,
  24, 33, 61, -66, -48, 30, 32, 16, -23, -39, -27, 8, 8, -8, -18, 12, 21, 23, -16, 14,
  46, -12, -12, -20, -56, 16, -18, -45, 22, -42, -20, -18, -20, 14, -22, 17, 15, 12, 10, 32,
  -9, 23, -13, 8, 26, -30, 28, -19, 19, -10, 13, 9, -30, 9, 11, 21, -71, -22, -71, -44,
  -31, -32, -40, 36, 27, -24, 39, -24, 24, 14, 56, 14, 47, 42, 46, 69, 43, -14, 10, -23,
  17, -24, 28, 46, -10, -24, 8, 17, 12, -8, -14, -18, 8, -30, -9, -8, 8, 8, 8, 8,
  8, -17, 9, 33, -8, -8, 9, 9, 8, 9, 58, 20, -27, -9, -8, -14, 47, 27, 34, 44,
  45, 13, 61, 58, 51, 81, -46, -16, -31, 32, -49, -9, -42, -9, 27, 9, -17, -17, -37, -17,
  -9, -19, 21, 34, 17, -22, 19, 13, 33, -9, -25, -21, 33, 10, -23, -11, 16, 14, 21, 12,
  -20, 72, 15, -29, -26, -39, 37, -26, -53, 18, 15, 18, 26, 42, 36, -10, -9, 89, -46, 60,
  -47, -51, 9, 21, 42, -83, 34, 33, 83, -90, 66, -50, 30, 62, -15, 70, -35, -18, 60, -28,
  -35, 15, -35, -17, 28, 21, 52, 24, -15, 23, 23, 21, 10, -25, 22, -33, 33, -35, 36, 32,
  47, 15, -15, 24, 17, -17, -26, -68, 66, 55, 19, -62, 30, -29, 33, -106, 37, -13, -32, 43,
  58, -24, 37, 107, -27, 15, -71, -27, 177, 55, 175, 216, -94, -53, 78, 130, 286, 420, 363, 348,
  -291, 260, -81, 139, -145, 104, 155, -66, -60, 68, -135, -60, 198, -72, -101, -88, 312, 514, 477, 393,
  407, -488, 25
];

const macd = [
  -18, -80, -88, -70, -75, -95, -140, -150, -90, -65, -50, -40, -32, -22, 3, 28, 44, 24, 4, -4,
  7, 30, 55, 67, 65, 60, 54, 49, 51, 53, 42, 16, -2, -9, -27, -50, -70, -60, -55, -52,
  -38, 2, 36, 49, 49, 57, 79, 91, 91, 73, 54, 45, 39, 28, 15, 5, 11, 26, 33, 35,
  35, 30, 14, 2, -7, 5, 13, 2, -2, -10, -19, -25, -30, -31, -37, -20, -8, 7, 21, 27,
  29, 31, 29, 24, 12, 9, 17, 16, 16, 12, 10, 9, -1, -5, -5, -2, -14, -38, -50, -64,
  -76, -90, -104, -98, -90, -85, -76, -68, -47, -29, -4, 24, 47, 81, 99, 113, 132, 131, 124, 105,
  92, 78, 70, 68, 60, 31, 13, 6, -1, -12, -28, -42, -44, -55, -59, -60, -59, -49, -38, -27,
  -20, -18, -13, -10, -8, -9, -8, -9, -10, -8, 2, 9, 4, -3, -10, -20, -12, -10, -4, 1,
  16, 31, 48, 62, 82, 97, 96, 88, 62, 50, 38, 22, 2, -15, -24, -25, -30, -38, -42, -50,
  -58, -64, -64, -40, -20, -13, -2, 7, 14, 16, 13, 11, 10, 17, 17, 9, 8, 8, 8, 9,
  7, 5, 3, 1, -4, -15, -20, -25, -27, -25, -20, -14, -8, 6, 18, 28, 31, 40, 43, 47,
  45, 34, 26, 26, 25, 20, 15, 18, 22, 24, 40, 37, 33, 30, 20, 29, 16, 1, -5, -12,
  -28, -40, -56, -80, -75, -66, -57, -45, -42, -41, -35, -27, -17, -17, -7, 2, 6, -2, -3, 0,
  17, 26, 36, 37, 38, 32, 22, 15, 20, 25, 36, 34, 33, 24, 17, 6, 0, -9, -19, -18,
  -16, -14, -8, 3, 10, 15, 14, 7, 27, 43, 72, 90, 92, 72, 70, 70, 103, 154, 184, 207,
  175, 162, 122, 101, 67, 38, 16, -12, -40, -57, -77, -95, -77, -77, -86, -98, -88, -43, 24, 63,
  115, 124, 121
];

const STEP = 9.264;
const START = 53;

function addBar(group, i, y, width, height, color) {
  const rect = document.createElementNS("http://www.w3.org/2000/svg", "rect");
  rect.setAttribute("x", START + i * STEP - width / 2);
  rect.setAttribute("y", y);
  rect.setAttribute("width", width);
  rect.setAttribute("height", height);
  rect.setAttribute("fill", color);
  group.appendChild(rect);
}

const volumeBars = document.getElementById("volumeBars");
volume.forEach((v, i) => {
  const h = Math.abs(v);
  addBar(volumeBars, i, 702 - h, 8.4, h, v > 0 ? "#e42a2a" : "#129612");
});

const macdBars = document.getElementById("macdBars");
macd.forEach((v, i) => {
  addBar(macdBars, i, v > 0 ? 547 - v : 547, 6.4, Math.abs(v), v > 0 ? "#d63333" : "#149214");
});
```
